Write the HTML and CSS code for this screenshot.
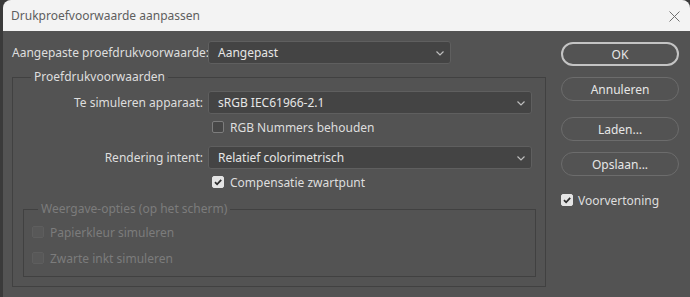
FILE: index.html
```html
<!DOCTYPE html>
<html lang="nl">
<head>
<meta charset="utf-8">
<title>Drukproefvoorwaarde aanpassen</title>
<link rel="stylesheet" href="styles.css">
</head>
<body>
<div class="window">
  <div class="titlebar">
    <span class="title">Drukproefvoorwaarde aanpassen</span>
    <svg class="close" width="11" height="11" viewBox="0 0 11 11"><path d="M0.5 0.5 L10.5 10.5 M10.5 0.5 L0.5 10.5" stroke="#707070" stroke-width="1" fill="none"/></svg>
  </div>
  <div class="content">
    <div class="main">
      <div class="row row-top">
        <span class="lbl lbl-left">Aangepaste proefdrukvoorwaarde:</span>
        <div class="select select-short"><span>Aangepast</span><svg class="chev" width="8" height="5" viewBox="0 0 8 5"><path d="M0.5 0.5 L4 4 L7.5 0.5" stroke="#bdbdbd" stroke-width="1.2" fill="none"/></svg></div>
      </div>
      <fieldset class="group outer">
        <legend>Proefdrukvoorwaarden</legend>
        <div class="row row-in">
          <span class="lbl">Te simuleren apparaat:</span>
          <div class="select"><span>sRGB IEC61966-2.1</span><svg class="chev" width="8" height="5" viewBox="0 0 8 5"><path d="M0.5 0.5 L4 4 L7.5 0.5" stroke="#bdbdbd" stroke-width="1.2" fill="none"/></svg></div>
        </div>
        <div class="check-row cr-a">
          <span class="cb"></span><span>RGB Nummers behouden</span>
        </div>
        <div class="row row-in row-b">
          <span class="lbl">Rendering intent:</span>
          <div class="select"><span>Relatief colorimetrisch</span><svg class="chev" width="8" height="5" viewBox="0 0 8 5"><path d="M0.5 0.5 L4 4 L7.5 0.5" stroke="#bdbdbd" stroke-width="1.2" fill="none"/></svg></div>
        </div>
        <div class="check-row cr-b">
          <span class="cb checked"><svg width="12" height="12" viewBox="0 0 12 12"><path d="M3 6.2 L5.1 8.3 L9.2 3.9" stroke="#2e2e2e" stroke-width="1.8" fill="none"/></svg></span><span>Compensatie zwartpunt</span>
        </div>
        <fieldset class="group inner">
          <legend>Weergave-opties (op het scherm)</legend>
          <div class="check-row dis d1"><span class="cb off"></span><span>Papierkleur simuleren</span></div>
          <div class="check-row dis d2"><span class="cb off"></span><span>Zwarte inkt simuleren</span></div>
        </fieldset>
      </fieldset>
    </div>
    <div class="side">
      <div class="btn btn-default">OK</div>
      <div class="btn b2">Annuleren</div>
      <div class="btn b3">Laden...</div>
      <div class="btn b2">Opslaan...</div>
      <div class="check-row preview">
        <span class="cb checked"><svg width="12" height="12" viewBox="0 0 12 12"><path d="M3 6.2 L5.1 8.3 L9.2 3.9" stroke="#2e2e2e" stroke-width="1.8" fill="none"/></svg></span><span>Voorvertoning</span>
      </div>
    </div>
  </div>
</div>
</body>
</html>
```

FILE: styles.css
```css
* { box-sizing: border-box; }
html, body { margin: 0; padding: 0; }
body {
  background: #3a3a3a;
  width: 690px;
  height: 297px;
  overflow: hidden;
  font-family: "Noto Sans", "Open Sans", sans-serif;
  font-size: 12px;
  color: #dedede;
}
.window {
  margin-left: 3px;
  width: 687px;
  height: 297px;
  border-radius: 8px 8px 0 0;
  overflow: hidden;
  background: #535353;
}
.titlebar {
  height: 31px;
  background: #f3f3f3;
  display: flex;
  align-items: center;
  justify-content: space-between;
  padding: 0 10px 0 8px;
}
.title {
  color: #5e5e5e;
  font-size: 12px;
}
.close { display: block; margin-top: 1px; }
.content {
  display: flex;
  padding: 10px 0 0 9px;
}
.main { width: 534px; }
.row {
  display: grid;
  grid-template-columns: 191px 243px;
  column-gap: 5px;
  align-items: center;
}
.row-in { grid-template-columns: 190px 324px; }
.lbl { text-align: right; white-space: nowrap; }
.lbl-left { text-align: left; }
.select {
  height: 23px;
  background: #444444;
  border: 1px solid #5f5f5f;
  border-radius: 3px;
  display: flex;
  align-items: center;
  justify-content: space-between;
  padding: 0 6px 0 9px;
  color: #e6e6e6;
}
.chev { display: block; margin-top: 1px; }
.group {
  margin: 0;
  padding: 0;
  border: 1px solid #414141;
  min-width: 0;
}
.group legend {
  padding: 0 3px;
  line-height: 16px;
  height: 16px;
}
.outer {
  width: 534px;
  margin-top: 5px;
  padding-top: 6px;
  padding-bottom: 9px;
}
.outer > legend { margin-left: 18px; }
.check-row {
  display: flex;
  align-items: center;
  height: 18px;
  gap: 6px;
}
.cb {
  width: 12px;
  height: 12px;
  border: 1px solid #7d7d7d;
  background: #474747;
  border-radius: 2px;
  flex: none;
  display: block;
}
.cb svg { display: block; margin: -1px; }
.cb.checked { background: #e4e4e4; border-color: #e4e4e4; }
.cb.off { background: #585858; border-color: #5e5e5e; }
.cr-a { margin-top: 4px; padding-left: 199px; }
.row-b { margin-top: 10px; }
.cr-b { margin-top: 4px; padding-left: 199px; }
.inner {
  margin: 10px 0 0 10px;
  width: 513px;
  padding-bottom: 9px;
}
.inner > legend { margin-left: 14px; color: #7c7c7c; }
.dis { color: #7c7c7c; padding-left: 8px; }
.d1 { margin-top: 6px; }
.d2 { margin-top: 8px; }
.side {
  margin-left: 15px;
  padding-top: 1px;
  width: 118px;
}
.btn {
  height: 24px;
  width: 118px;
  border: 1px solid #6c6c6c;
  border-radius: 12px;
  display: flex;
  align-items: center;
  justify-content: center;
  color: #e6e6e6;
}
.btn-default { border: 2px solid #c4c4c4; }
.b2 { margin-top: 11px; }
.b3 { margin-top: 16px; }
.preview { margin-top: 15px; gap: 5px; }
```
